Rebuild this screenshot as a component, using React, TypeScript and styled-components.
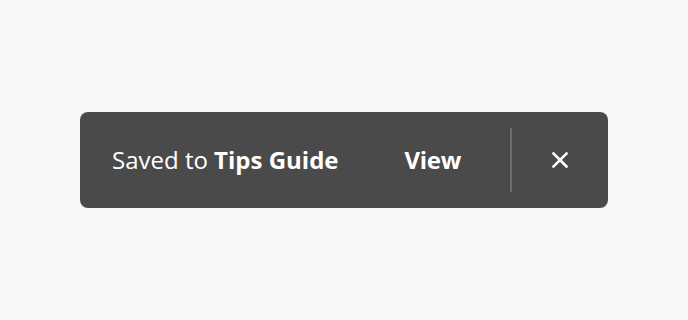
import React from "react";
import styled, { createGlobalStyle } from "styled-components";

const GlobalStyle = createGlobalStyle`
  html, body, #root {
    margin: 0;
    height: 100%;
  }
  body {
    background: #f8f8f8;
    font-family: "Open Sans", "Noto Sans", sans-serif;
  }
`;

const Page = styled.main`
  height: 100%;
  display: flex;
  align-items: center;
  justify-content: center;
`;

const Toast = styled.div`
  width: 528px;
  height: 96px;
  box-sizing: border-box;
  display: flex;
  align-items: center;
  padding-left: 32px;
  background: #4a4a4a;
  border-radius: 8px;
  color: #ffffff;
`;

const Message = styled.p`
  margin: 0;
  flex: 1;
  font-size: 24px;
  font-weight: 400;
  line-height: 1;
  white-space: nowrap;

  strong {
    font-weight: 700;
  }
`;

const ActionButton = styled.button`
  border: 0;
  background: none;
  padding: 0;
  margin-right: 49px;
  color: #ffffff;
  font-family: inherit;
  font-size: 24px;
  font-weight: 700;
  line-height: 1;
  letter-spacing: -0.3px;
  cursor: pointer;
`;

const Divider = styled.span`
  width: 2px;
  height: 64px;
  background: #6e6e6e;
`;

const CloseButton = styled.button`
  width: 96px;
  height: 96px;
  border: 0;
  background: none;
  padding: 0;
  display: flex;
  align-items: center;
  justify-content: center;
  cursor: pointer;
`;

export default function App() {
  return (
    <>
      <GlobalStyle />
      <Page>
        <Toast role="status">
          <Message>
            Saved to <strong>Tips Guide</strong>
          </Message>
          <ActionButton>View</ActionButton>
          <Divider />
          <CloseButton aria-label="Close">
            <svg width="18" height="18" viewBox="0 0 18 18">
              <path
                d="M2.5 2.5 L15.5 15.5 M15.5 2.5 L2.5 15.5"
                stroke="#ffffff"
                strokeWidth="2.6"
                strokeLinecap="square"
              />
            </svg>
          </CloseButton>
        </Toast>
      </Page>
    </>
  );
}
